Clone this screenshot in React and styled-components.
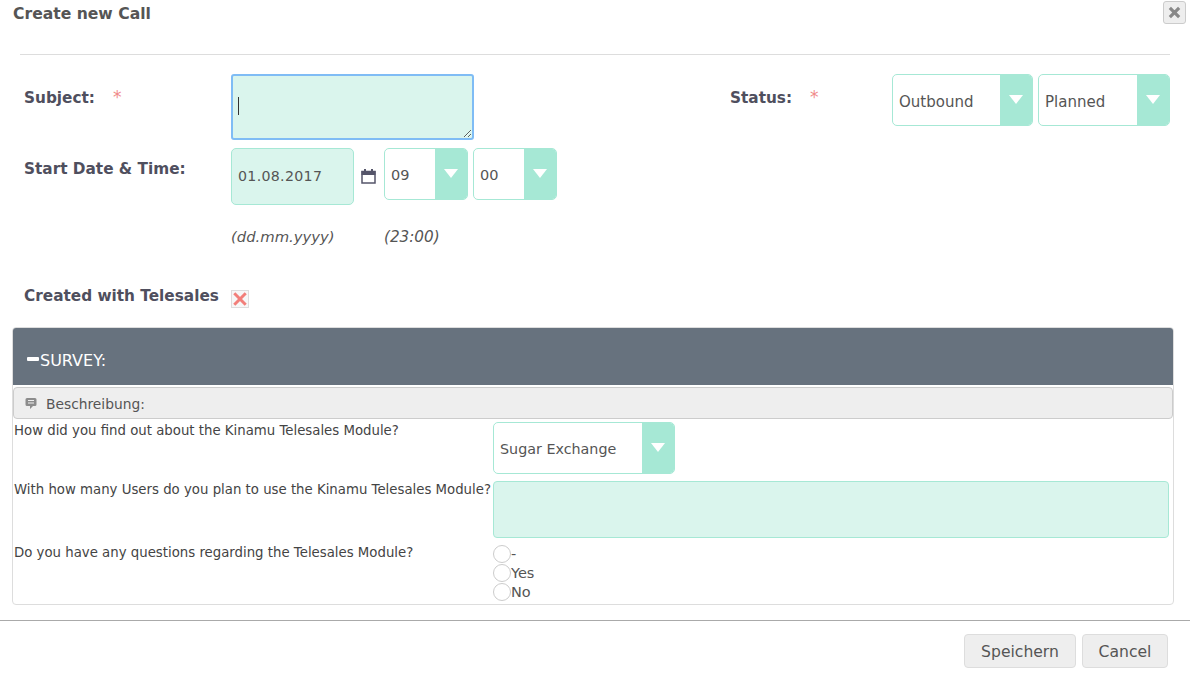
import React from "react";
import styled, { createGlobalStyle } from "styled-components";

const GlobalStyle = createGlobalStyle`
  html, body { margin: 0; padding: 0; background: #fff; }
  body { font-family: "DejaVu Sans", Verdana, sans-serif; color: #555; overflow: hidden; }
  * { box-sizing: border-box; }
`;

const Dialog = styled.div`
  width: 1190px;
  height: 676px;
  display: flex;
  flex-direction: column;
`;

const Header = styled.header`
  height: 55px;
  margin: 0 20px 0 0;
  display: flex;
  justify-content: space-between;
  align-items: flex-start;
  position: relative;
  &::after {
    content: "";
    position: absolute;
    left: 20px;
    right: 0;
    bottom: 0;
    border-bottom: 1px solid #ddd;
  }
`;

const Title = styled.h1`
  margin: 5px 0 0 13px;
  font-size: 15.6px;
  line-height: 18px;
  font-weight: bold;
  color: #555;
`;

const CloseButton = styled.button`
  width: 23px;
  height: 23px;
  margin: 1px -16px 0 0;
  padding: 0;
  display: flex;
  align-items: center;
  justify-content: center;
  background: #eee;
  border: 1px solid #ccc;
  border-radius: 3px;
`;

const Form = styled.div`
  padding: 19px 20px 0 24px;
  display: grid;
  grid-template-columns: 207px 499px 162px 1fr;
  grid-auto-rows: min-content;
`;

const Label = styled.label`
  font-size: 15.3px;
  line-height: 18px;
  font-weight: bold;
  color: #4f4f5e;
  padding-top: ${(p) => p.$top}px;
  white-space: nowrap;
`;

const Star = styled.span`
  color: #f08a8a;
  font-weight: normal;
  font-size: 17px;
  margin-left: 18px;
`;

const Cell = styled.div`
  display: flex;
  align-items: flex-start;
  gap: ${(p) => p.$gap || 0}px;
  padding-bottom: ${(p) => p.$bottom || 0}px;
  grid-column: ${(p) => (p.$wide ? "2 / 5" : "auto")};
`;

const SubjectWrap = styled.div`
  position: relative;
  width: 243px;
  height: 66px;
`;

const SubjectArea = styled.textarea`
  display: block;
  width: 100%;
  height: 100%;
  margin: 0;
  padding: 21px 6px 0;
  background: #daf5ed;
  border: 2px solid #7fbcf5;
  border-radius: 3px;
  outline: none;
  font: 13px/18px "DejaVu Sans", sans-serif;
  color: #333;
`;

const Caret = styled.span`
  position: absolute;
  left: 7px;
  top: 23px;
  width: 1px;
  height: 18px;
  background: #333;
`;

const SelectBox = styled.div`
  width: ${(p) => p.$width}px;
  height: 52px;
  display: flex;
  background: #fff;
  border: 1px solid #a6e8d5;
  border-radius: 5px;
  overflow: hidden;
`;

const SelectValue = styled.span`
  flex: 1;
  padding: ${(p) => p.$top}px 0 0 6px;
  font-size: ${(p) => p.$size}px;
  line-height: 18px;
  color: #555;
`;

const SelectArrow = styled.span`
  width: 32px;
  background: #a6e8d5;
  display: flex;
  justify-content: center;
  padding-top: 20px;
  &::after {
    content: "";
    width: 0;
    height: 0;
    border-left: 7px solid transparent;
    border-right: 7px solid transparent;
    border-top: 9px solid #fff;
  }
`;

const DateInput = styled.div`
  width: 123px;
  height: 57px;
  padding: 18px 6px 0;
  background: #daf5ed;
  border: 1px solid #a6e8d5;
  border-radius: 5px;
  font-size: 14.2px;
  line-height: 18px;
  letter-spacing: 0.3px;
  color: #555;
`;

const CalendarSlot = styled.span`
  width: 30px;
  padding: 21px 0 0 7px;
  color: #55556a;
  line-height: 0;
`;

const Hints = styled.div`
  grid-column: 2 / 5;
  display: flex;
  padding-top: 23px;
  height: 82px;
`;

const Hint = styled.em`
  width: ${(p) => p.$width}px;
  font-size: ${(p) => p.$size}px;
  line-height: 18px;
  color: #555;
`;

const CheckMark = styled.span`
  width: 18px;
  height: 18px;
  margin-top: 3px;
  display: flex;
  align-items: center;
  justify-content: center;
  background: #f7f7f7;
  border: 1px solid #ddd;
`;

const Panel = styled.section`
  margin: 0 16px 0 12px;
  height: 278px;
  border: 1px solid #ddd;
  border-radius: 4px;
  overflow: hidden;
`;

const PanelHead = styled.div`
  height: 58px;
  margin: -1px -1px 0;
  padding: 24px 0 0 15px;
  display: flex;
  align-items: flex-start;
  background: #67727e;
  color: #fff;
  font-size: 16px;
  line-height: 20px;
`;

const Minus = styled.span`
  width: 12px;
  height: 4px;
  margin: 6px 1px 0 0;
  background: #fff;
  border-radius: 1px;
`;

const SubHead = styled.div`
  height: 32px;
  margin: 2px 0 0;
  padding: 1px 0 0 11px;
  display: flex;
  align-items: center;
  gap: 9px;
  background: #eee;
  border: 1px solid #ccc;
  border-radius: 4px;
  font-size: 13.8px;
  color: #555;
`;

const Question = styled.div`
  display: grid;
  grid-template-columns: 480px 1fr;
  padding: ${(p) => p.$top}px 4px 0 0;
`;

const QuestionText = styled.div`
  font-size: 13.3px;
  line-height: 16px;
  padding: ${(p) => p.$top}px 0 0 1px;
  color: #444;
  white-space: nowrap;
`;

const SurveyArea = styled.div`
  height: 57px;
  background: #daf5ed;
  border: 1px solid #a6e8d5;
  border-radius: 4px;
`;

const RadioList = styled.div`
  display: flex;
  flex-direction: column;
  gap: 1px;
`;

const RadioRow = styled.label`
  height: 18px;
  display: flex;
  align-items: center;
  font-size: 14.5px;
  line-height: 18px;
  color: #555;
`;

const RadioCircle = styled.span`
  width: 18px;
  height: 18px;
  border: 1px solid #ccc;
  border-radius: 50%;
  background: #fff;
`;

const Footer = styled.footer`
  margin-top: 15px;
  padding: 13px 22px 0 0;
  border-top: 1px solid #aaa;
  display: flex;
  justify-content: flex-end;
  gap: 6px;
`;

const Button = styled.button`
  width: ${(p) => p.$width}px;
  height: 34px;
  padding: 1px 0 0;
  background: #eee;
  border: 1px solid #ddd;
  border-radius: 4px;
  font: 15.6px "DejaVu Sans", sans-serif;
  color: #555;
`;

const Select = ({ width, value, size = 15, top = 17 }) => (
  <SelectBox $width={width}>
    <SelectValue $size={size} $top={top}>{value}</SelectValue>
    <SelectArrow />
  </SelectBox>
);

const CrossIcon = ({ size, color, weight }) => (
  <svg width={size} height={size} viewBox="0 0 14 14">
    <path d="M2 2 L12 12 M12 2 L2 12" stroke={color} strokeWidth={weight} fill="none" />
  </svg>
);

const CalendarIcon = () => (
  <svg width="15" height="15" viewBox="0 0 15 15" fill="currentColor">
    <rect x="3" y="0" width="2" height="3" />
    <rect x="10" y="0" width="2" height="3" />
    <rect x="0.5" y="2" width="14" height="4" />
    <rect x="1" y="2.5" width="13" height="11.5" fill="none" stroke="currentColor" strokeWidth="1.5" />
  </svg>
);

const BubbleIcon = () => (
  <svg width="12" height="13" viewBox="0 0 12 13">
    <path d="M2 1 H10 A1.5 1.5 0 0 1 11.5 2.5 V7.5 A1.5 1.5 0 0 1 10 9 H8 L5 12 V9 H2 A1.5 1.5 0 0 1 0.5 7.5 V2.5 A1.5 1.5 0 0 1 2 1 Z" fill="#8c8c8c" />
    <path d="M3 3.5 H9 M3 6 H9" stroke="#eee" strokeWidth="1" />
  </svg>
);

const App = () => (
  <Dialog>
    <GlobalStyle />
    <Header>
      <Title>Create new Call</Title>
      <CloseButton aria-label="Close"><CrossIcon size={13} color="#888" weight={3.4} /></CloseButton>
    </Header>
    <Form>
      <Label $top={14}>Subject:<Star>*</Star></Label>
      <Cell $bottom={8}>
        <SubjectWrap>
          <SubjectArea autoFocus />
          <Caret />
        </SubjectWrap>
      </Cell>
      <Label $top={14}>Status:<Star>*</Star></Label>
      <Cell $gap={5}>
        <Select width={141} value="Outbound" top={18} />
        <Select width={132} value="Planned" top={18} />
      </Cell>

      <Label $top={12}>Start Date &amp; Time:</Label>
      <Cell $wide>
        <DateInput>01.08.2017</DateInput>
        <CalendarSlot><CalendarIcon /></CalendarSlot>
        <Cell $gap={5}>
          <Select width={84} value="09" size={14.5} />
          <Select width={84} value="00" size={14.5} />
        </Cell>
      </Cell>

      <span />
      <Hints>
        <Hint $width={153} $size={14.8}>(dd.mm.yyyy)</Hint>
        <Hint $width={100} $size={15.2}>(23:00)</Hint>
      </Hints>

      <Label $top={0}>Created with Telesales</Label>
      <Cell $wide $bottom={19}>
        <CheckMark><CrossIcon size={16} color="#f27f7a" weight={2.6} /></CheckMark>
      </Cell>
    </Form>
    <Panel>
      <PanelHead><Minus />SURVEY:</PanelHead>
      <SubHead><BubbleIcon />Beschreibung:</SubHead>
      <Question $top={3}>
        <QuestionText $top={1}>How did you find out about the Kinamu Telesales Module?</QuestionText>
        <Select width={182} value="Sugar Exchange" size={14.3} />
      </Question>
      <Question $top={7}>
        <QuestionText $top={1}>With how many Users do you plan to use the Kinamu Telesales Module?</QuestionText>
        <SurveyArea />
      </Question>
      <Question $top={7}>
        <QuestionText $top={0}>Do you have any questions regarding the Telesales Module?</QuestionText>
        <RadioList>
          <RadioRow><RadioCircle />-</RadioRow>
          <RadioRow><RadioCircle />Yes</RadioRow>
          <RadioRow><RadioCircle />No</RadioRow>
        </RadioList>
      </Question>
    </Panel>
    <Footer>
      <Button $width={112}>Speichern</Button>
      <Button $width={86}>Cancel</Button>
    </Footer>
  </Dialog>
);

export default App;
